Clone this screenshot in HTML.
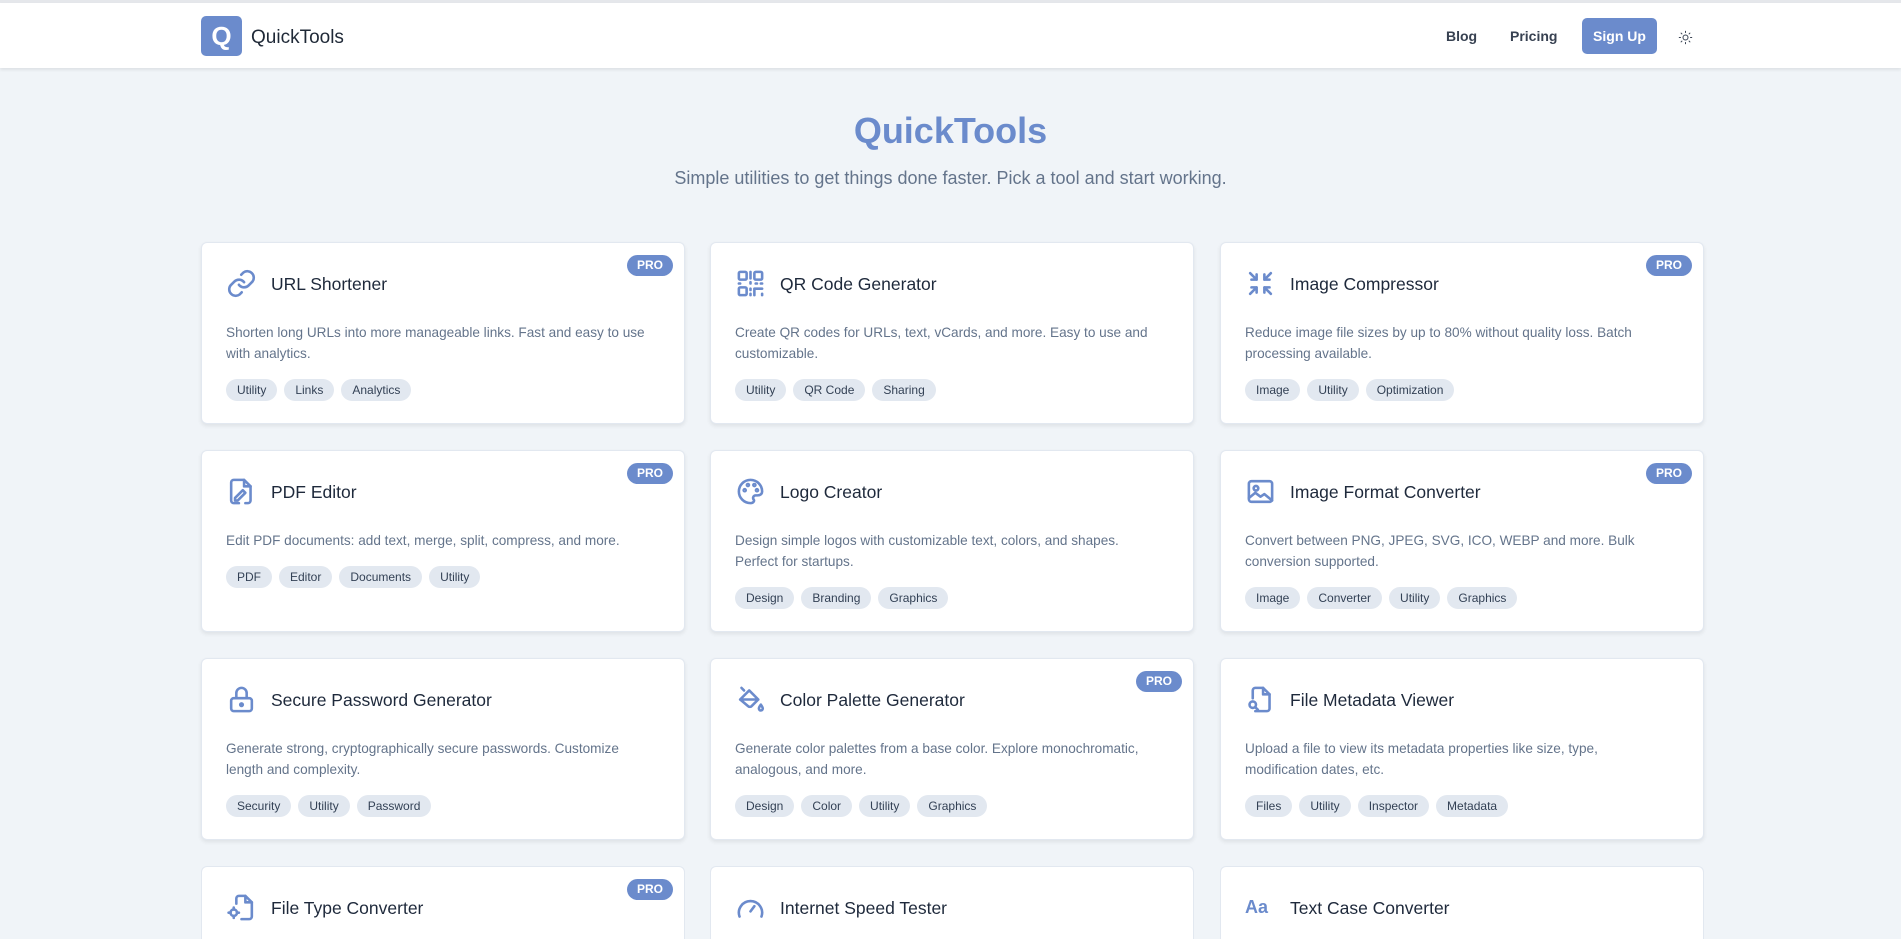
<!DOCTYPE html>
<html><head><meta charset="utf-8"><style>
*{box-sizing:border-box;margin:0;padding:0}
html{width:1901px;height:939px;overflow:hidden}
body{width:1901px;height:939px;overflow:hidden;background:#f0f4f8;font-family:"Liberation Sans",sans-serif;color:#1e293b;position:relative}
.top{height:3px;background:#e5e7eb}
header{height:65px;background:#fff;box-shadow:0 2px 3px rgba(0,0,0,.08);position:relative}
.logo{position:absolute;left:201px;top:13px;width:41px;height:40px;background:#6b8bcc;border-radius:5px;color:#fff;font-weight:bold;font-size:26px;text-align:center;line-height:40px}
.brand{position:absolute;left:251px;top:24px;font-size:19px;color:#1f2937}
.nav{position:absolute;top:0;height:65px;display:flex;align-items:center;font-size:14px;color:#374151;font-weight:bold}
.btn{position:absolute;left:1582px;top:15px;width:75px;height:36px;background:#6b8bcc;color:#fff;border-radius:5px;font-weight:bold;font-size:14px;text-align:center;line-height:36px}
h1{position:absolute;left:0;width:1901px;top:110px;text-align:center;font-size:36px;color:#6b8bcc;font-weight:bold}
.sub{position:absolute;left:0;width:1901px;top:168px;text-align:center;font-size:18px;color:#64748b}
.card{position:absolute;width:484px;height:182px;background:#fff;border:1px solid #e2e8f0;border-radius:6px;box-shadow:0 2px 4px rgba(0,0,0,.08)}
.card.last{height:73px;border-bottom:none;border-radius:6px 6px 0 0;box-shadow:none}
.ic{position:absolute;left:24px;top:25px;width:31px;height:31px}
.t{position:absolute;left:69px;top:31px;font-size:17.5px;color:#1e293b}
.d{position:absolute;left:24px;top:79px;width:430px;font-size:13.6px;line-height:21px;color:#64748b}
.tags{position:absolute;left:24px;display:flex;gap:7px}
.tags span{background:#e2e8f0;color:#334155;border-radius:11px;height:22px;line-height:22px;padding:0 11px;font-size:12px}
.pro{position:absolute;right:11px;top:12px;width:46px;height:21px;background:#6b8bcc;color:#fff;border-radius:11px;font-size:12px;font-weight:bold;text-align:center;line-height:21px}
svg{fill:none;stroke:#6b8bcc;stroke-width:2;stroke-linecap:round;stroke-linejoin:round}
</style></head><body>
<div class="top"></div>
<header>
<div class="logo">Q</div><div class="brand">QuickTools</div>
<div class="nav" style="left:1446px">Blog</div>
<div class="nav" style="left:1510px">Pricing</div>
<div class="btn">Sign Up</div>
<svg style="position:absolute;left:1678px;top:27px;width:15px;height:15px;stroke:#374151;stroke-width:1.6" viewBox="0 0 24 24"><circle cx="12" cy="12" r="4"/><path d="M12 2v2M12 20v2M4.9 4.9l1.4 1.4M17.7 17.7l1.4 1.4M2 12h2M20 12h2M4.9 19.1l1.4-1.4M17.7 6.3l1.4-1.4"/></svg>
</header>
<h1>QuickTools</h1>
<div class="sub">Simple utilities to get things done faster. Pick a tool and start working.</div>

<div class="card" style="left:201px;top:242px"><div class="pro">PRO</div>
<svg class="ic" viewBox="0 0 24 24"><path d="M10 13a5 5 0 0 0 7.5.5l3-3a5 5 0 0 0-7-7l-1.7 1.7"/><path d="M14 11a5 5 0 0 0-7.5-.5l-3 3a5 5 0 0 0 7 7l1.7-1.7"/></svg>
<div class="t">URL Shortener</div><div class="d">Shorten long URLs into more manageable links. Fast and easy to use with analytics.</div>
<div class="tags" style="top:136px"><span>Utility</span><span>Links</span><span>Analytics</span></div></div>

<div class="card" style="left:710px;top:242px">
<svg class="ic" viewBox="0 0 24 24"><rect x="3" y="3" width="6" height="6" rx="1"/><rect x="15" y="3" width="6" height="6" rx="1"/><rect x="3" y="15" width="6" height="6" rx="1"/><path d="M12 3v5M12 11v1M3 12h1M20 12h1M16 12h1M12 16v1M12 20v1M15 21v-5h6M21 20v1"/></svg>
<div class="t">QR Code Generator</div><div class="d">Create QR codes for URLs, text, vCards, and more. Easy to use and customizable.</div>
<div class="tags" style="top:136px"><span>Utility</span><span>QR Code</span><span>Sharing</span></div></div>

<div class="card" style="left:1220px;top:242px"><div class="pro">PRO</div>
<svg class="ic" viewBox="0 0 24 24"><path d="M4 4l5 5M9 5v4H5M20 4l-5 5M15 5v4h4M4 20l5-5M5 15h4v4M20 20l-5-5M19 15h-4v4"/></svg>
<div class="t">Image Compressor</div><div class="d">Reduce image file sizes by up to 80% without quality loss. Batch processing available.</div>
<div class="tags" style="top:136px"><span>Image</span><span>Utility</span><span>Optimization</span></div></div>

<div class="card" style="left:201px;top:450px"><div class="pro">PRO</div>
<svg class="ic" viewBox="0 0 24 24"><path d="M10 21H6a2 2 0 0 1-2-2V5a2 2 0 0 1 2-2h8l5 5v11a2 2 0 0 1-2 2h-2"/><path d="M14 3v5h5"/><path d="M13 11l2 2-6 6H7v-2z"/></svg>
<div class="t">PDF Editor</div><div class="d">Edit PDF documents: add text, merge, split, compress, and more.</div>
<div class="tags" style="top:115px"><span>PDF</span><span>Editor</span><span>Documents</span><span>Utility</span></div></div>

<div class="card" style="left:710px;top:450px">
<svg class="ic" viewBox="0 0 24 24"><path d="M12 21a9 9 0 1 1 9-9c0 2-1.5 3-3.5 3H16a2 2 0 0 0-1.5 3.3c.5.6.3 2.7-2.5 2.7z"/><circle cx="7.5" cy="11" r=".8"/><circle cx="10" cy="7" r=".8"/><circle cx="15" cy="7" r=".8"/><circle cx="17" cy="11" r=".8"/></svg>
<div class="t">Logo Creator</div><div class="d">Design simple logos with customizable text, colors, and shapes.<br>Perfect for startups.</div>
<div class="tags" style="top:136px"><span>Design</span><span>Branding</span><span>Graphics</span></div></div>

<div class="card" style="left:1220px;top:450px"><div class="pro">PRO</div>
<svg class="ic" viewBox="0 0 24 24"><rect x="3" y="4" width="18" height="16" rx="2"/><circle cx="8.5" cy="9.5" r="1.8"/><path d="M3 17l5-4 4 3 3-2 6 5"/></svg>
<div class="t">Image Format Converter</div><div class="d">Convert between PNG, JPEG, SVG, ICO, WEBP and more. Bulk conversion supported.</div>
<div class="tags" style="top:136px"><span>Image</span><span>Converter</span><span>Utility</span><span>Graphics</span></div></div>

<div class="card" style="left:201px;top:658px">
<svg class="ic" viewBox="0 0 24 24"><rect x="4" y="11" width="16" height="10" rx="2"/><path d="M8 11V7a4 4 0 0 1 8 0v4"/><circle cx="12" cy="16" r="1"/></svg>
<div class="t">Secure Password Generator</div><div class="d">Generate strong, cryptographically secure passwords. Customize<br>length and complexity.</div>
<div class="tags" style="top:136px"><span>Security</span><span>Utility</span><span>Password</span></div></div>

<div class="card" style="left:710px;top:658px"><div class="pro">PRO</div>
<svg class="ic" viewBox="0 0 24 24"><path d="M5 3l2 2M4 12l7-7 7 7-5 5a2 2 0 0 1-3 0l-6-5zM4 12h14"/><path d="M20 16s-1.5 2-1.5 3a1.5 1.5 0 0 0 3 0c0-1-1.5-3-1.5-3z"/></svg>
<div class="t">Color Palette Generator</div><div class="d">Generate color palettes from a base color. Explore monochromatic, analogous, and more.</div>
<div class="tags" style="top:136px"><span>Design</span><span>Color</span><span>Utility</span><span>Graphics</span></div></div>

<div class="card" style="left:1220px;top:658px">
<svg class="ic" viewBox="0 0 24 24"><path d="M6 11V5a2 2 0 0 1 2-2h6l5 5v11a2 2 0 0 1-2 2H8"/><path d="M14 3v5h5"/><circle cx="6" cy="16" r="2.5"/><path d="M8 18l2 2"/></svg>
<div class="t">File Metadata Viewer</div><div class="d">Upload a file to view its metadata properties like size, type,<br>modification dates, etc.</div>
<div class="tags" style="top:136px"><span>Files</span><span>Utility</span><span>Inspector</span><span>Metadata</span></div></div>

<div class="card last" style="left:201px;top:866px"><div class="pro">PRO</div>
<svg class="ic" viewBox="0 0 24 24"><path d="M8 9V5a2 2 0 0 1 2-2h5l5 5v11a2 2 0 0 1-2 2h-6"/><path d="M15 3v5h5"/><circle cx="6" cy="16" r="2.5"/><path d="M6 12v1.5M6 18.5V20M2 16h1.5M8.5 16H10"/></svg>
<div class="t">File Type Converter</div></div>

<div class="card last" style="left:710px;top:866px">
<svg class="ic" viewBox="0 0 24 24"><path d="M3.5 19a9 9 0 1 1 17 0"/><path d="M12 15l3-4"/></svg>
<div class="t">Internet Speed Tester</div></div>

<div class="card last" style="left:1220px;top:866px">
<div class="ic" style="color:#6b8bcc;font-weight:bold;font-size:18px;line-height:31px">Aa</div>
<div class="t">Text Case Converter</div></div>
</body></html>
